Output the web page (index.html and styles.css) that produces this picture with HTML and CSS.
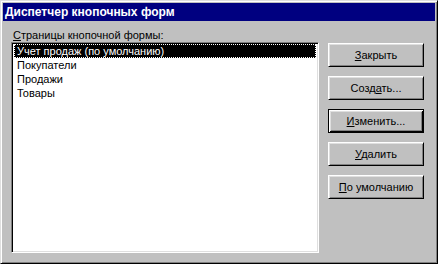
FILE: index.html
```html
<!DOCTYPE html>
<html lang="ru">
<head>
    <meta charset="UTF-8">
    <title>Диспетчер кнопочных форм</title>
    <link rel="stylesheet" href="styles.css">
</head>
<body>
    <div class="window">
        <div class="title-bar">Диспетчер кнопочных форм</div>
        <div class="content">
            <div class="pages">
                <div class="pages-label"><u>С</u>траницы кнопочной формы:</div>
                <div class="list">
                    <div class="item selected"><span class="focus">Учет продаж (по умолчанию)</span></div>
                    <div class="item">Покупатели</div>
                    <div class="item">Продажи</div>
                    <div class="item">Товары</div>
                </div>
            </div>
            <div class="buttons">
                <button class="btn"><u>З</u>акрыть</button>
                <button class="btn">Созд<u>а</u>ть...</button>
                <button class="btn default"><u>И</u>зменить...</button>
                <button class="btn"><u>У</u>далить</button>
                <button class="btn"><u>П</u>о умолчанию</button>
            </div>
        </div>
    </div>
</body>
</html>
```

FILE: styles.css
```css
body {
    margin: 0;
    background-color: #c0c0c0;
    font-family: "Liberation Sans", Arial, sans-serif;
    font-size: 11px;
}
.window {
    width: 438px;
    height: 264px;
    box-sizing: border-box;
    padding: 1px;
    background-color: #c0c0c0;
    border: 1px solid;
    border-color: #dfdfdf #000 #000 #dfdfdf;
    box-shadow: inset 1px 1px 0 #fff, inset -1px -1px 0 #808080;
    display: flex;
    flex-direction: column;
}
.title-bar {
    height: 18px;
    margin: 1px 1px 0 1px;
    padding-left: 2px;
    background-color: #000080;
    color: #fff;
    font-weight: bold;
    font-size: 12px;
    line-height: 18px;
}
.content {
    flex: 1;
    display: flex;
    padding: 8px 0 0 9px;
}
.pages {
    display: flex;
    flex-direction: column;
}
.pages-label {
    padding-left: 2px;
    line-height: 13px;
}
.list {
    width: 308px;
    height: 211px;
    box-sizing: border-box;
    background-color: #fff;
    border: 1px solid;
    border-color: #808080 #fff #fff #808080;
    box-shadow: inset 1px 1px 0 #000, inset -1px -1px 0 #dfdfdf;
    padding: 1px 2px;
}
.item {
    height: 14px;
    line-height: 14px;
    padding-left: 3px;
    white-space: nowrap;
}
.item.selected {
    background-color: #000;
    color: #fff;
    padding-left: 0;
    outline: 1px dotted #fff;
    outline-offset: -1px;
}
.focus {
    padding-left: 3px;
}
.buttons {
    display: flex;
    flex-direction: column;
    gap: 9px;
    margin: 14px 0 0 9px;
}
.btn {
    width: 96px;
    height: 24px;
    box-sizing: border-box;
    padding: 0;
    background-color: #c0c0c0;
    color: #000;
    font: inherit;
    border: 1px solid;
    border-color: #fff #000 #000 #fff;
    box-shadow: inset 1px 1px 0 #dfdfdf, inset -1px -1px 0 #808080;
    text-align: center;
}
/* кнопка по умолчанию: чёрная рамка внутри того же размера */
.btn.default {
    border-color: #000;
    box-shadow: inset 1px 1px 0 #fff, inset -1px -1px 0 #000,
                inset 2px 2px 0 #dfdfdf, inset -2px -2px 0 #808080;
}
```
